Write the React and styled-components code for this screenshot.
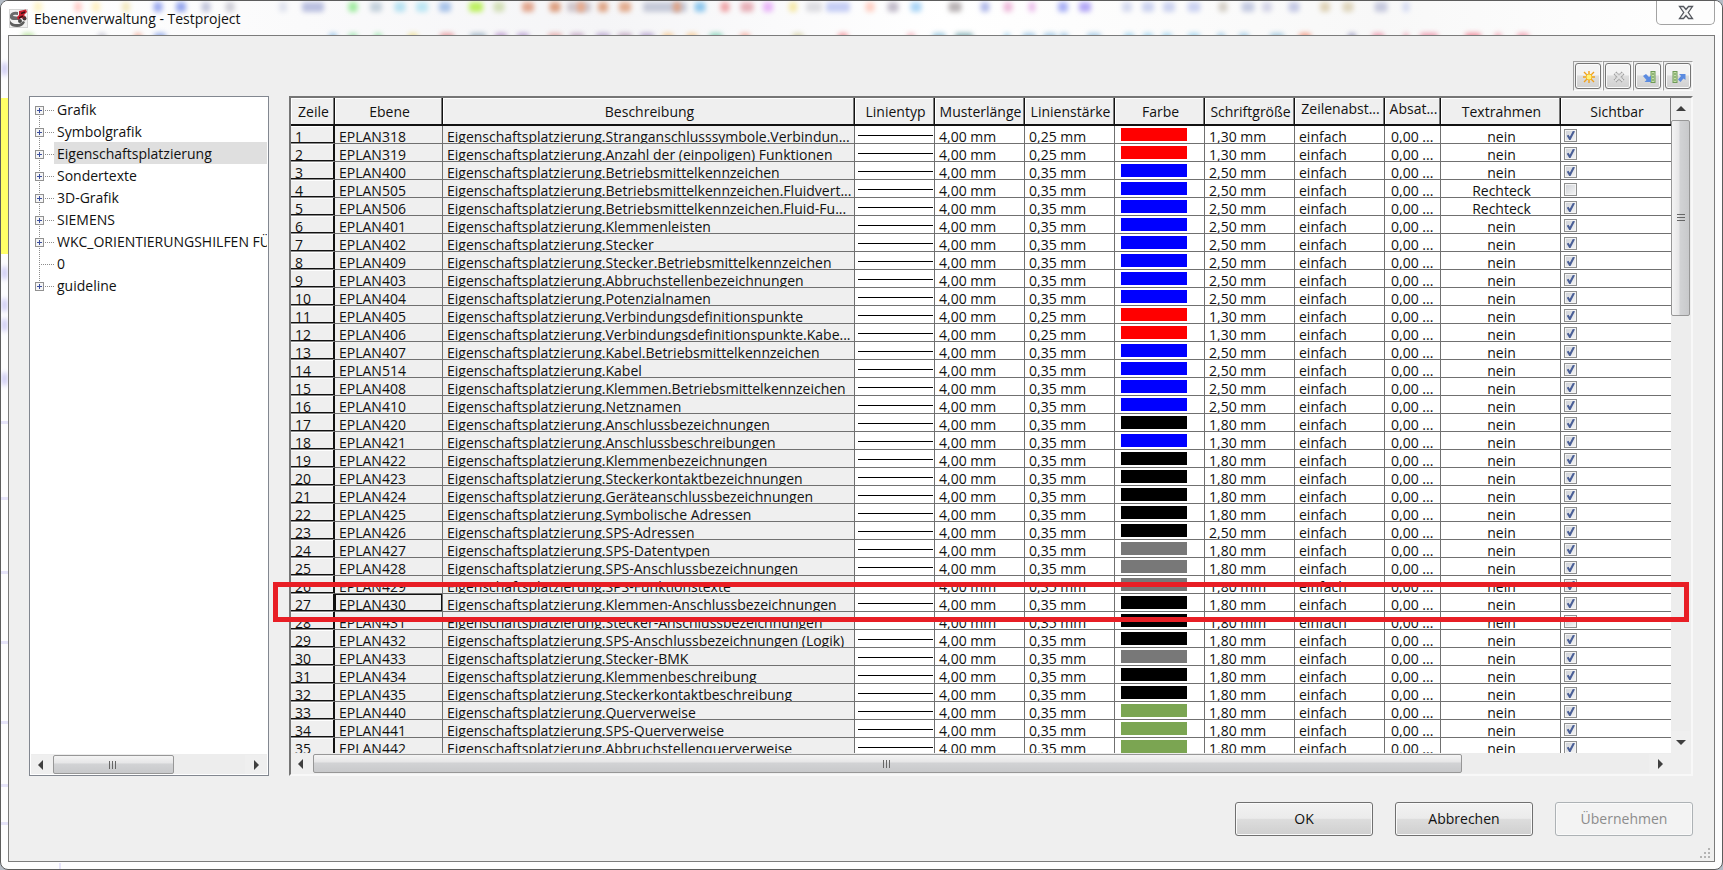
import React, { useState } from 'react';
import styled, { createGlobalStyle } from 'styled-components';

const GlobalStyle = createGlobalStyle`
  * {
    box-sizing: border-box;
  }
  body {
    margin: 0;
    background: #b4bcc6;
    color: #111;
    font-family: 'Open Sans', 'Noto Sans', sans-serif;
    font-size: 14px;
  }
  button {
    font: inherit;
    color: inherit;
  }
`;

const Window = styled.div`
  position: relative;
  display: flex;
  flex-direction: column;
  min-height: 100vh;
  padding: 0 7px 7px;
  border: 1px solid #5c5c5c;
  border-radius: 8px;
  overflow: hidden;
  background: #fdfdfe;
`;

const Backdrop = styled.svg`
  position: absolute;
  top: 0;
  left: 0;
`;

const TitleBar = styled.header`
  position: relative;
  display: flex;
  align-items: flex-start;
  height: 34px;
`;

const AppIcon = styled.svg`
  margin: 8px 6px 0 1px;
`;

const Title = styled.h1`
  flex: 1;
  margin: 0;
  font-size: 14px;
  font-weight: 400;
  line-height: 36px;
`;

const CloseButton = styled.button`
  display: flex;
  align-items: center;
  justify-content: center;
  width: 59px;
  height: 24px;
  padding: 0;
  background: #fdfdfd;
  border: 1px solid #a3a3a3;
  border-top: none;
  border-radius: 0 0 5px 5px;
`;

const Frame = styled.main`
  position: relative;
  flex: 1;
  display: flex;
  flex-direction: column;
  padding: 25px 21px 25px 20px;
  background: #efefef;
  border: 1px solid #7b7b7b;
`;

const Toolbar = styled.div`
  display: flex;
  justify-content: flex-end;
  margin-bottom: 5px;
`;

const ToolSlot = styled.div`
  padding: 1px;
  border: 1px solid;
  border-color: #a0a0a0 #fbfbfb #fbfbfb #a0a0a0;
`;

const ToolButton = styled.button`
  display: flex;
  align-items: center;
  justify-content: center;
  width: 26px;
  height: 26px;
  padding: 2px 0 0 2px;
  background: linear-gradient(#f3f3f3 45%, #dedede 50%, #d0d0d0);
  border: 1px solid #757575;
  border-radius: 3px;
  box-shadow: inset 0 0 0 1px #fafafa;
`;

const Panels = styled.div`
  flex: 1;
  display: flex;
  gap: 20px;
`;

const TreePanel = styled.nav`
  display: flex;
  flex-direction: column;
  width: 240px;
  flex-shrink: 0;
  padding: 0 1px 1px;
  background: #fff;
  border: 1px solid #828790;
`;

const TreeList = styled.ul`
  flex: 1;
  margin: 0;
  padding: 1px 0 0 4px;
  list-style: none;
  overflow: hidden;
`;

const TreeItem = styled.li`
  display: flex;
  height: 22px;
  line-height: 23px;
  white-space: nowrap;
`;

const TreeLabel = styled.span`
  flex: 1;
  padding-left: 3px;
  overflow: hidden;
  background: ${(p) => (p.$selected ? '#dfdfdf' : 'transparent')};
`;

const TreeGlyph = styled.svg`
  flex-shrink: 0;
`;

const GridPanel = styled.section`
  position: relative;
  flex: 1;
  min-width: 0;
  display: grid;
  grid-template-columns: 1fr 20px;
  grid-template-rows: 1fr 21px;
  border: 2px solid;
  border-color: #757575 #f8f8f8 #f8f8f8 #757575;
`;

const GridBody = styled.div`
  height: 655px;
  overflow: hidden;
  background: #fff;
`;

const Table = styled.table`
  width: 100%;
  table-layout: fixed;
  border-collapse: separate;
  border-spacing: 0;
`;

const HeadCell = styled.th`
  height: 28px;
  padding: 0;
  font-weight: 400;
  background: #efefef;
  border-right: ${(p) => (p.$last ? 'none' : '1px solid #111')};
  border-bottom: 2px solid #111;
  box-shadow: inset -1px 0 #777, inset 1px 1px #fff;
`;

const HeadText = styled.div`
  height: 26px;
  padding-left: 2px;
  line-height: ${(p) => (p.$wrapped ? '21px' : '27px')};
  overflow: hidden;
  white-space: pre;
  text-align: center;
`;

const Cell = styled.td`
  padding: 0;
  background: ${(p) => (p.$gray ? '#efefef' : '#fff')};
  border-right: ${(p) => (p.$last ? 'none' : '1px solid #707070')};
  border-bottom: 1px solid #707070;
  box-shadow: ${(p) => (p.$focused ? 'inset 0 0 0 1px #111' : 'none')};
`;

const RowHead = styled.th`
  padding: 0;
  font-weight: 400;
  text-align: left;
  background: #efefef;
  border-right: 1px solid #111;
  border-bottom: 1px solid #8a8a8a;
  box-shadow: inset -1px -1px #111, inset 0 1px #fff;
`;

const CellText = styled.div`
  height: 17px;
  padding: 0 4px;
  line-height: 21px;
  overflow: hidden;
  white-space: nowrap;
  text-align: ${(p) => (p.$center ? 'center' : 'left')};
`;

const CenterText = styled(CellText)`
  padding: 0 4px 0 6px;
  text-align: center;
`;

const SpacingText = styled(CellText)`
  padding: 0 0 0 6px;
`;

const LineSample = styled.div`
  height: 1px;
  margin: 1px 1px 0 3px;
  background: #000;
`;

const Swatch = styled.div`
  width: 66px;
  height: 13px;
  margin-left: 6px;
  background: ${(p) => p.$color};
`;

const CheckBox = styled.input`
  appearance: none;
  display: block;
  position: relative;
  width: 13px;
  height: 13px;
  margin: 2px 0 0 3px;
  border: 1px solid #8e8f8f;
  background: linear-gradient(135deg, #cdd0d6, #f6f6f6);
  box-shadow: inset 0 0 0 1px #f4f4f4;
  &:checked::after {
    content: '';
    position: absolute;
    inset: 1px;
    background: #4a5f97;
    clip-path: polygon(8% 52%, 28% 42%, 42% 64%, 76% 0, 100% 4%, 50% 100%, 36% 100%);
  }
`;

const ScrollBar = styled.div`
  display: flex;
  flex-direction: ${(p) => (p.$vertical ? 'column' : 'row')};
  ${(p) => (p.$vertical ? 'padding-right: 1px;' : 'height: 20px; padding-top: 1px;')}
  background: #ededed;
`;

const ScrollArrow = styled.button`
  display: flex;
  align-items: center;
  justify-content: center;
  flex-shrink: 0;
  width: ${(p) => (p.$vertical ? 'auto' : '22px')};
  height: ${(p) => (p.$vertical ? '22px' : 'auto')};
  padding: 0;
  border: none;
  background: #efefef;
`;

const ScrollTrack = styled.div`
  flex: 1;
`;

const ScrollThumb = styled.div`
  display: flex;
  align-items: center;
  justify-content: center;
  width: ${(p) => (p.$vertical ? 'auto' : p.$size)};
  height: ${(p) => (p.$vertical ? p.$size : '19px')};
  border: 1px solid #979797;
  border-radius: 2px;
  background: linear-gradient(${(p) => (p.$vertical ? '90deg' : '180deg')}, #f4f4f4, #e6e6e7 42%, #d2d3d5 46%, #c8c9cb);
`;

const Corner = styled.div`
  background: #efefef;
`;

const Highlight = styled.div`
  position: absolute;
  top: 484px;
  left: -18px;
  right: 2px;
  height: 40px;
  border: 5px solid #e81e25;
  pointer-events: none;
`;

const Footer = styled.footer`
  display: flex;
  justify-content: flex-end;
  gap: 22px;
  padding-top: 26px;
`;

const DialogButton = styled.button`
  width: 138px;
  height: 34px;
  padding: 0 0 2px;
  background: linear-gradient(#f2f2f2, #ebebeb 48%, #dddddd 50%, #cfcfcf);
  border: 1px solid #707070;
  border-radius: 3px;
  box-shadow: inset 0 0 0 1px #fafafa;
  &:disabled {
    color: #8c8c8c;
    background: #f3f3f3;
    border-color: #adb2b5;
  }
`;

const ResizeGrip = styled.svg`
  position: absolute;
  right: 3px;
  bottom: 2px;
`;

const RED = '#ff0000';
const BLUE = '#0000ff';
const BLACK = '#000000';
const GRAY = '#787878';
const GREEN = '#7ba552';

const columns = [
  { title: 'Zeile', width: 44 },
  { title: 'Ebene', width: 108 },
  { title: 'Beschreibung', width: 412 },
  { title: 'Linientyp', width: 80 },
  { title: 'Musterlänge', width: 90 },
  { title: 'Linienstärke', width: 90 },
  { title: 'Farbe', width: 90 },
  { title: 'Schriftgröße', width: 90 },
  { title: 'Zeilenabst...\nand', width: 90 },
  { title: 'Absat...\nabst...', width: 56 },
  { title: 'Textrahmen', width: 120 },
  { title: 'Sichtbar' },
];

// Ebene, Beschreibung, Farbe, Schriftgröße
const layers = [
  [318, 'Stranganschlusssymbole.Verbindun...', RED, '1,30'],
  [319, 'Anzahl der (einpoligen) Funktionen', RED, '1,30'],
  [400, 'Betriebsmittelkennzeichen', BLUE, '2,50'],
  [505, 'Betriebsmittelkennzeichen.Fluidvert...', BLUE, '2,50'],
  [506, 'Betriebsmittelkennzeichen.Fluid-Fu...', BLUE, '2,50'],
  [401, 'Klemmenleisten', BLUE, '2,50'],
  [402, 'Stecker', BLUE, '2,50'],
  [409, 'Stecker.Betriebsmittelkennzeichen', BLUE, '2,50'],
  [403, 'Abbruchstellenbezeichnungen', BLUE, '2,50'],
  [404, 'Potenzialnamen', BLUE, '2,50'],
  [405, 'Verbindungsdefinitionspunkte', RED, '1,30'],
  [406, 'Verbindungsdefinitionspunkte.Kabe...', RED, '1,30'],
  [407, 'Kabel.Betriebsmittelkennzeichen', BLUE, '2,50'],
  [514, 'Kabel', BLUE, '2,50'],
  [408, 'Klemmen.Betriebsmittelkennzeichen', BLUE, '2,50'],
  [410, 'Netznamen', BLUE, '2,50'],
  [420, 'Anschlussbezeichnungen', BLACK, '1,80'],
  [421, 'Anschlussbeschreibungen', BLUE, '1,30'],
  [422, 'Klemmenbezeichnungen', BLACK, '1,80'],
  [423, 'Steckerkontaktbezeichnungen', BLACK, '1,80'],
  [424, 'Geräteanschlussbezeichnungen', BLACK, '1,80'],
  [425, 'Symbolische Adressen', BLACK, '1,80'],
  [426, 'SPS-Adressen', BLACK, '2,50'],
  [427, 'SPS-Datentypen', GRAY, '1,80'],
  [428, 'SPS-Anschlussbezeichnungen', GRAY, '1,80'],
  [429, 'SPS-Funktionstexte', GRAY, '1,80'],
  [430, 'Klemmen-Anschlussbezeichnungen', BLACK, '1,80'],
  [431, 'Stecker-Anschlussbezeichnungen', BLACK, '1,80'],
  [432, 'SPS-Anschlussbezeichnungen (Logik)', BLACK, '1,80'],
  [433, 'Stecker-BMK', GRAY, '1,80'],
  [434, 'Klemmenbeschreibung', BLACK, '1,80'],
  [435, 'Steckerkontaktbeschreibung', BLACK, '1,80'],
  [440, 'Querverweise', GREEN, '1,80'],
  [441, 'SPS-Querverweise', GREEN, '1,80'],
  [442, 'Abbruchstellenquerverweise', GREEN, '1,80'],
];

const framed = [505, 506];
const hidden = [505, 431];

const treeItems = [
  { label: 'Grafik', expandable: true },
  { label: 'Symbolgrafik', expandable: true },
  { label: 'Eigenschaftsplatzierung', expandable: true },
  { label: 'Sondertexte', expandable: true },
  { label: '3D-Grafik', expandable: true },
  { label: 'SIEMENS', expandable: true },
  { label: 'WKC_ORIENTIERUNGSHILFEN FÜR', expandable: true },
  { label: '0', expandable: false },
  { label: 'guideline', expandable: true },
];

// x, width, colour of the toolbar icons that shine through the glass
const upperBlobs = [
  [37, 8, '#fdf3c4'], [77, 7, '#ffc9c4'], [95, 8, '#fff0c0'], [125, 8, '#f3e8bd'], [157, 9, '#9dabf0'],
  [180, 10, '#94a6ee'], [205, 9, '#c3c6dc'], [229, 9, '#cfcfd8'], [282, 8, '#dfe2ee'], [312, 22, '#b9bfe0'],
  [352, 9, '#9fec9f'], [375, 12, '#c5d2dd'], [399, 11, '#b8e2f2'], [421, 12, '#bce6f4'], [444, 12, '#a9c4ea'],
  [475, 14, '#bdf060'], [498, 11, '#d3dfb8'], [527, 12, '#e3a78f'], [554, 11, '#dd9f80'], [578, 24, '#cfc6cc'],
  [580, 8, '#e8a888'], [602, 10, '#e0a686'], [624, 12, '#e2ac8e'], [664, 44, '#c5c9d8'], [676, 8, '#dfa184'],
  [699, 11, '#8fc8ee'], [724, 9, '#efa5a8'], [746, 13, '#e7b0b8'], [767, 10, '#e9b6f8'], [792, 8, '#f5e8a5'],
  [813, 16, '#dddde2'], [837, 24, '#c5cdf5'], [869, 9, '#ffd0c4'], [892, 11, '#c2bccb'], [915, 11, '#acd6f6'],
  [954, 13, '#b9b3b5'], [984, 9, '#b3bbea'], [1007, 9, '#efbcdc'], [1031, 7, '#ecc0ec'], [1062, 10, '#a9b0f6'],
  [1084, 12, '#b4a8f6'], [1126, 10, '#d5daf0'], [1147, 12, '#ccd3f0'], [1168, 12, '#ccd3f0'], [1193, 13, '#ccd3f2'],
  [1222, 9, '#d5d0c8'], [1247, 13, '#c5cbe2'], [1266, 10, '#d5d6e8'], [1293, 11, '#c5c9e5'], [1324, 10, '#dfd3b8'],
  [1347, 11, '#dfd6bd'], [1380, 13, '#c6c9de'], [1405, 7, '#d5dbf3'],
];

const lowerBlobs = [
  [27, 12, '#bde5a5'], [101, 8, '#c9c9d5'], [137, 8, '#f1b4a4'], [159, 12, '#98aeea'], [332, 8, '#9fc8ea'],
  [352, 9, '#a5e8b5'], [377, 8, '#a5e8b5'], [412, 10, '#efe2a0'], [446, 14, '#e8a0a5'], [477, 16, '#a9bccb'],
  [500, 12, '#c0a0d2'], [522, 12, '#bda5d5'], [554, 14, '#e5aeae'], [576, 14, '#c8adc8'], [602, 14, '#beaad2'],
  [624, 14, '#c5acc5'], [646, 14, '#bba9d2'], [667, 11, '#f6cf9e'], [691, 11, '#f6cf9e'], [715, 13, '#8fd5be'],
  [744, 10, '#f5b4a8'], [797, 11, '#dcd8b4'], [842, 10, '#f39ba2'], [910, 8, '#f6b9c2'], [938, 13, '#9fcbe0'],
  [963, 18, '#8bb5ba'], [1006, 6, '#a5d5ee'], [1028, 13, '#a8cce6'], [1049, 13, '#a8cce6'], [1063, 9, '#a8cce6'],
  [1093, 14, '#a8cce6'], [1128, 10, '#a9d8f0'], [1147, 10, '#a9d8f0'], [1166, 10, '#a9d8f0'], [1193, 12, '#a9d8f0'],
  [1220, 8, '#a9d0e8'], [1243, 10, '#a9d0e8'], [1276, 14, '#a9cce0'], [1304, 12, '#f3a08c'], [1351, 8, '#a5a5c8'],
  [1377, 12, '#ee9fb2'], [1405, 5, '#ee9fb2'], [1428, 18, '#ee9fb2'], [1472, 16, '#f08f9f'], [1497, 7, '#f3a5b5'],
  [1522, 12, '#f3a5b5'],
];

function GlassBackdrop() {
  return (
    <Backdrop width="100%" height="100%" aria-hidden="true">
      <defs>
        <filter id="glass" x="-80%" y="-80%" width="260%" height="260%">
          <feGaussianBlur stdDeviation="2.6" />
        </filter>
        <linearGradient id="sheen">
          <stop offset="0" stopColor="#fff" />
          <stop offset="0.35" stopColor="#f5f5f7" />
          <stop offset="0.55" stopColor="#fff" />
          <stop offset="0.8" stopColor="#f8f8f8" />
          <stop offset="1" stopColor="#fff" />
        </linearGradient>
      </defs>
      <rect width="100%" height="34" fill="url(#sheen)" />
      {upperBlobs.map(([x, w, color]) => (
        <rect key={x} x={x - w / 2} y="1" width={w} height="10" rx="3" fill={color} filter="url(#glass)" />
      ))}
      {lowerBlobs.map(([x, w, color]) => (
        <rect key={x} x={x - w / 2} y="32" width={w} height="10" rx="3" fill={color} filter="url(#glass)" />
      ))}
      <rect x="0" y="97" width="8" height="156" fill="#ffff66" />
      {[62, 266, 298, 318, 372].map((y) => (
        <rect key={y} x="1" y={y} width="5" height="12" fill="#c5c2f2" filter="url(#glass)" />
      ))}
      {[420, 496, 570, 640, 720, 783, 821].map((y) => (
        <rect key={y} x="0" y={y} width="8" height="3" fill="#e6e4fa" />
      ))}
      <rect x="58" y="862" width="2" height="7" fill="#e6e4fa" />
    </Backdrop>
  );
}

function TreeNodeGlyph({ expandable, first, last }) {
  return (
    <TreeGlyph width="19" height="22" viewBox="0 0 19 22" aria-hidden="true">
      <g stroke="#8c8c8c" strokeDasharray="1 1">
        {!first && <path d="M4.5 0V12" />}
        {!last && <path d="M4.5 12V22" />}
        <path d="M4 12.5H19" />
      </g>
      {expandable && (
        <>
          <rect x="0.5" y="8.5" width="8" height="8" fill="#f5f5f5" stroke="#919191" />
          <path d="M2 12.5H7M4.5 10V15" stroke="#3c4f9e" />
        </>
      )}
    </TreeGlyph>
  );
}

const arrows = {
  left: 'M7 1V11L2 6Z',
  right: 'M4 1V11L9 6Z',
  up: 'M1 8H11L6 3Z',
  down: 'M1 4H11L6 9Z',
};

function Arrow({ dir }) {
  return (
    <svg width="12" height="12" viewBox="0 0 12 12" aria-hidden="true">
      <path d={arrows[dir]} fill="#3f3f3f" />
    </svg>
  );
}

function Scroller({ vertical, size }) {
  return (
    <ScrollBar $vertical={vertical}>
      <ScrollArrow $vertical={vertical} aria-label={vertical ? 'Nach oben' : 'Nach links'}>
        <Arrow dir={vertical ? 'up' : 'left'} />
      </ScrollArrow>
      <ScrollTrack>
        <ScrollThumb $vertical={vertical} $size={size}>
          <svg width="10" height="10" viewBox="0 0 10 10" aria-hidden="true">
            <path
              d={vertical ? 'M1 1.5H9M1 4.5H9M1 7.5H9' : 'M1.5 1V9M4.5 1V9M7.5 1V9'}
              stroke="#666"
            />
          </svg>
        </ScrollThumb>
      </ScrollTrack>
      <ScrollArrow $vertical={vertical} aria-label={vertical ? 'Nach unten' : 'Nach rechts'}>
        <Arrow dir={vertical ? 'down' : 'right'} />
      </ScrollArrow>
    </ScrollBar>
  );
}

function NewIcon() {
  return (
    <svg width="14" height="14" viewBox="0 0 14 14" aria-hidden="true">
      <path d="M7 1V13M1 7H13M2 2L12 12M12 2L2 12" stroke="#f0a01c" strokeWidth="1.4" />
      <circle cx="7" cy="7" r="3" fill="#fff27a" stroke="#f4b72e" />
    </svg>
  );
}

function DeleteIcon() {
  return (
    <svg width="14" height="14" viewBox="0 0 14 14" aria-hidden="true">
      <path d="M3 3L11 11M11 3L3 11" stroke="#9b9b9b" strokeWidth="4" strokeDasharray="1.5 0.5" />
      <path d="M3 3L11 11M11 3L3 11" stroke="#e2e2e2" strokeWidth="2" />
    </svg>
  );
}

function ImportIcon() {
  return (
    <svg width="14" height="14" viewBox="0 0 14 14" aria-hidden="true">
      <rect x="9" y="1.5" width="4" height="11" fill="#c5e0a8" stroke="#6f9a58" />
      <path d="M10 4H12M10 7H12M10 10H12" stroke="#5d8a48" />
      <path d="M1 6L4 4L7 7L9 5.500V12H2.500L4.500 10Z" fill="#5b8be0" />
    </svg>
  );
}

function ExportIcon() {
  return (
    <svg width="14" height="14" viewBox="0 0 14 14" aria-hidden="true">
      <rect x="1" y="1.5" width="4" height="11" fill="#c5e0a8" stroke="#6f9a58" />
      <path d="M2 4H4M2 7H4M2 10H4" stroke="#5d8a48" />
      <path d="M7 4H13.500V10L11.500 8.500L8.500 12L6 9.500L9 6Z" fill="#5b8be0" />
    </svg>
  );
}

function LayerRow({ index, layer, visible, onToggle }) {
  const [id, description, color, size] = layer;
  const name = `EPLAN${id}`;
  return (
    <tr>
      <RowHead scope="row"><CellText>{index + 1}</CellText></RowHead>
      <Cell $gray $focused={id === 430}><CellText>{name}</CellText></Cell>
      <Cell $gray><CellText>Eigenschaftsplatzierung.{description}</CellText></Cell>
      <Cell><LineSample /></Cell>
      <Cell><CellText>4,00 mm</CellText></Cell>
      <Cell><CellText>{color === RED ? '0,25 mm' : '0,35 mm'}</CellText></Cell>
      <Cell><Swatch $color={color} /></Cell>
      <Cell><CellText>{size} mm</CellText></Cell>
      <Cell><CellText>einfach</CellText></Cell>
      <Cell><SpacingText>0,00 ...</SpacingText></Cell>
      <Cell><CenterText>{framed.includes(id) ? 'Rechteck' : 'nein'}</CenterText></Cell>
      <Cell $last>
        <CheckBox type="checkbox" aria-label={`${name} sichtbar`} checked={visible} onChange={onToggle} />
      </Cell>
    </tr>
  );
}

function App() {
  const [selected, setSelected] = useState('Eigenschaftsplatzierung');
  const [hiddenIds, setHiddenIds] = useState(hidden);

  const toggle = (id) => {
    setHiddenIds((ids) => (ids.includes(id) ? ids.filter((i) => i !== id) : [...ids, id]));
  };

  return (
    <Window>
      <GlobalStyle />
      <GlassBackdrop />
      <TitleBar>
        <AppIcon width="19" height="19" viewBox="0 0 19 19" aria-hidden="true">
          <rect x="0.5" y="0.5" width="18" height="18" fill="#f1f1f1" stroke="#d4d4d4" />
          <path d="M1 6Q3 2 9 3V6Q4 5 4 7L10 8V11L4 11Q2 11 1 9Z" fill="#6b6b6b" />
          <path d="M1 11Q2 14 6 15H10Q13 14 14 12L16 13Q14 18 8 18Q2 18 1 15Z" fill="#5e5e5e" />
          <path d="M10 2L17 0.5L18 3L15 6L17 8L15 10L12 9L9 11L8 8L10 6Z" fill="#c9202f" />
          <path d="M12 4.500L16 3M10 9L14 7" stroke="#3a1217" strokeWidth="1.5" />
          <circle cx="11" cy="12" r="2" fill="#4a4a4a" />
          <circle cx="15.500" cy="9.500" r="2" fill="#4a3336" />
        </AppIcon>
        <Title>Ebenenverwaltung - Testproject</Title>
        <CloseButton aria-label="Schließen">
          <svg width="16" height="15" viewBox="0 0 16 15" aria-hidden="true">
            <path
              d="M1.5 1.5H5.500L8 4.500L10.500 1.500H14.500L10.300 7.500L14.500 13.500H10.500L8 10.500L5.500 13.500H1.500L5.700 7.500Z"
              fill="#f4f4f4"
              stroke="#55585f"
              strokeWidth="1.3"
            />
          </svg>
        </CloseButton>
      </TitleBar>
      <Frame>
        <Toolbar>
          <ToolSlot><ToolButton aria-label="Neu"><NewIcon /></ToolButton></ToolSlot>
          <ToolSlot><ToolButton aria-label="Löschen" disabled><DeleteIcon /></ToolButton></ToolSlot>
          <ToolSlot><ToolButton aria-label="Importieren"><ImportIcon /></ToolButton></ToolSlot>
          <ToolSlot><ToolButton aria-label="Exportieren"><ExportIcon /></ToolButton></ToolSlot>
        </Toolbar>
        <Panels>
          <TreePanel>
            <TreeList>
              {treeItems.map((item, i) => (
                <TreeItem key={item.label} onClick={() => setSelected(item.label)}>
                  <TreeNodeGlyph
                    expandable={item.expandable}
                    first={i === 0}
                    last={i === treeItems.length - 1}
                  />
                  <TreeLabel $selected={item.label === selected}>{item.label}</TreeLabel>
                </TreeItem>
              ))}
            </TreeList>
            <Scroller size="63%" />
          </TreePanel>
          <GridPanel>
            <GridBody>
              <Table>
                <colgroup>
                  {columns.map((c) => <col key={c.title} width={c.width} />)}
                </colgroup>
                <thead>
                  <tr>
                    {columns.map((c, i) => (
                      <HeadCell key={c.title} $last={i === columns.length - 1}>
                        <HeadText $wrapped={c.title.includes('\n')}>{c.title}</HeadText>
                      </HeadCell>
                    ))}
                  </tr>
                </thead>
                <tbody>
                  {layers.map((layer, i) => (
                    <LayerRow
                      key={layer[0]}
                      index={i}
                      layer={layer}
                      visible={!hiddenIds.includes(layer[0])}
                      onToggle={() => toggle(layer[0])}
                    />
                  ))}
                </tbody>
              </Table>
            </GridBody>
            <Scroller vertical size="32%" />
            <Scroller size="86%" />
            <Corner />
            <Highlight />
          </GridPanel>
        </Panels>
        <Footer>
          <DialogButton>OK</DialogButton>
          <DialogButton>Abbrechen</DialogButton>
          <DialogButton disabled>Übernehmen</DialogButton>
        </Footer>
        <ResizeGrip width="12" height="12" viewBox="0 0 12 12" aria-hidden="true">
          <path d="M9 1h2v2h-2zM5 5h2v2h-2zM9 5h2v2h-2zM1 9h2v2h-2zM5 9h2v2h-2zM9 9h2v2h-2z" fill="#b4b4b4" />
        </ResizeGrip>
      </Frame>
    </Window>
  );
}

export default App;
